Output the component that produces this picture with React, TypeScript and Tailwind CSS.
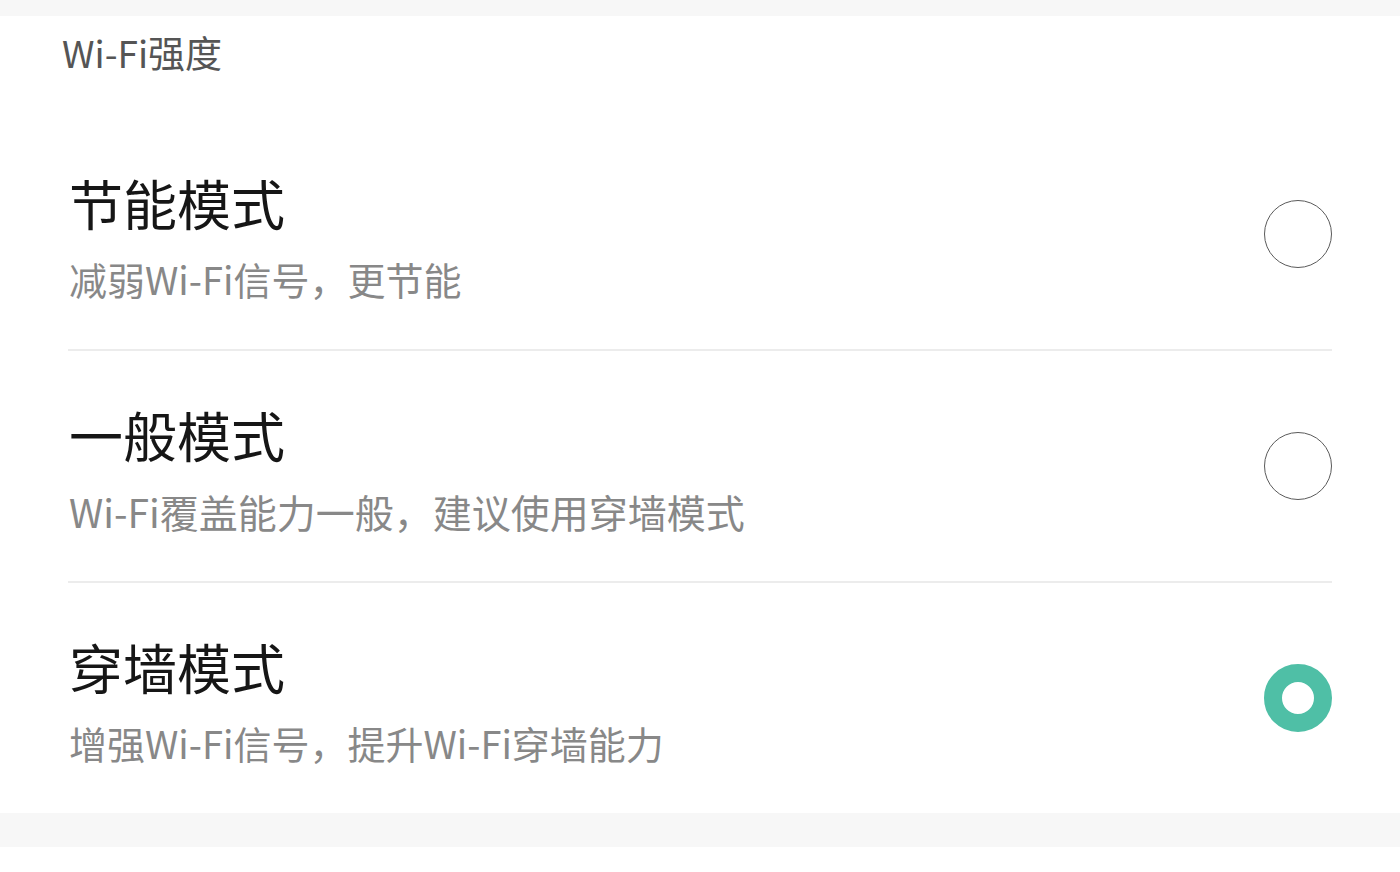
const FONT = '[font-family:"Noto_Sans_CJK_SC","Noto_Sans",sans-serif]';

type Mode = { title: string; desc: string; checked?: boolean; wide?: boolean };

const MODES: Mode[] = [
  { title: '节能模式', desc: '减弱Wi-Fi信号，更节能' },
  { title: '一般模式', desc: 'Wi-Fi覆盖能力一般，建议使用穿墙模式', wide: true },
  { title: '穿墙模式', desc: '增强Wi-Fi信号，提升Wi-Fi穿墙能力', checked: true },
];

function Radio({ checked }: { checked?: boolean }) {
  if (checked) {
    return <div className="h-[68px] w-[68px] shrink-0 rounded-full border-[18px] border-[#4fbfa6] bg-white" />;
  }
  return <div className="h-[68px] w-[68px] shrink-0 rounded-full border-[1.5px] border-[#5a5a5a] bg-white" />;
}

export default function App() {
  return (
    <div className={`min-h-[872px] w-[1400px] bg-white ${FONT}`}>
      <div className="h-[16px] bg-[#f7f7f7]" />
      <div className="bg-white">
        <div className="h-[103px] pl-[62px] pt-[12px]">
          <h2 className="text-[37px] leading-[48px] text-[#555]">Wi-Fi强度</h2>
        </div>
        <ul className="px-[68px]">
          {MODES.map((m, i) => (
            <li key={m.title}>
              {i > 0 && <div className="h-[2px] bg-[#ececec]" />}
              <div className="flex h-[230px] items-center justify-between">
                <div className="self-start pl-[1px] pt-[52px]">
                  <div className="text-[54px] leading-[64px] text-[#161616]">{m.title}</div>
                  <div
                    className={
                      m.wide
                        ? 'mt-[20px] text-[39px] leading-[48px] text-[#888]'
                        : 'mt-[20px] text-[38px] leading-[48px] text-[#888]'
                    }
                  >
                    {m.desc}
                  </div>
                </div>
                <Radio checked={m.checked} />
              </div>
            </li>
          ))}
        </ul>
      </div>
      <div className="h-[34px] bg-[#f7f7f7]" />
    </div>
  );
}
